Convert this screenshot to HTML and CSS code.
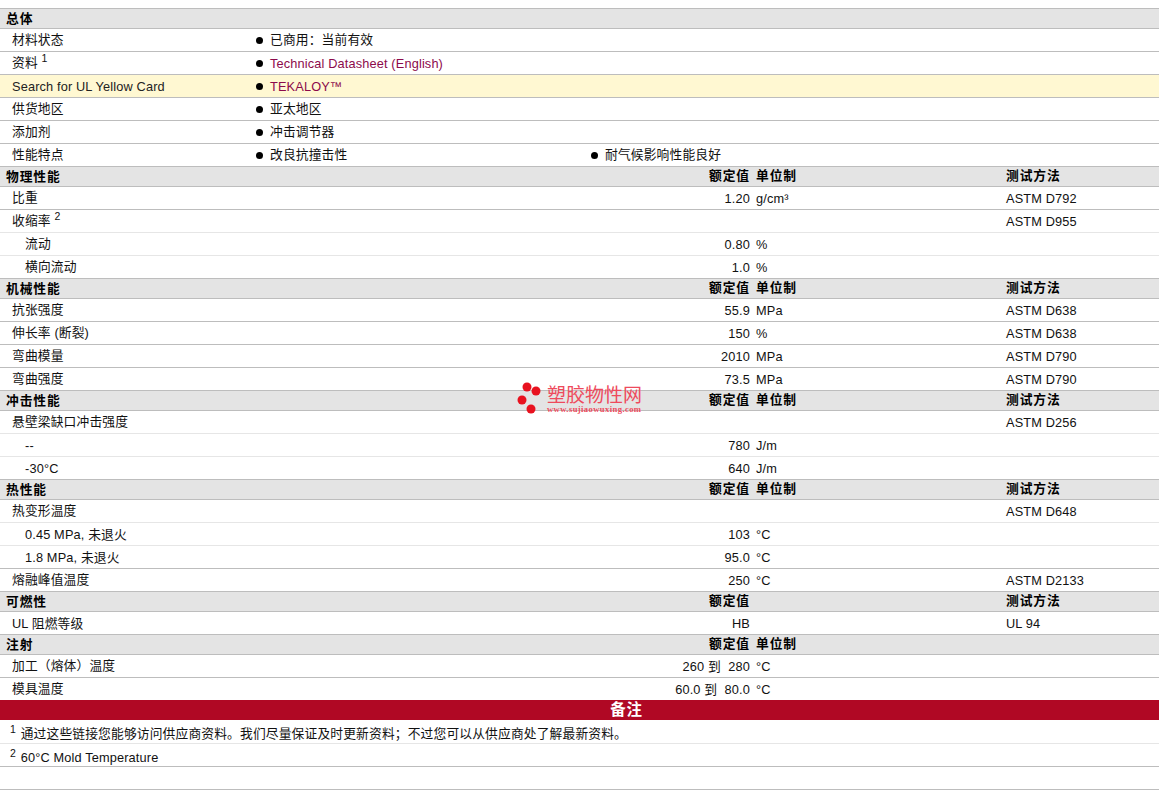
FILE: index.html
```html
<!DOCTYPE html>
<html lang="zh">
<head>
<meta charset="utf-8">
<title>TEKALOY</title>
<link rel="stylesheet" href="styles.css">
</head>
<body>
<div class="sheet">
  <div class="row head first"><span class="name">总体</span></div>
  <div class="row info"><span class="label">材料状态</span><span class="item">已商用：当前有效</span></div>
  <div class="row info"><span class="label">资料 <sup>1</sup></span><a class="item link latin">Technical Datasheet (English)</a></div>
  <div class="row info yellow"><a class="label latin">Search for UL Yellow Card</a><a class="item link latin">TEKALOY™</a></div>
  <div class="row info"><span class="label">供货地区</span><span class="item">亚太地区</span></div>
  <div class="row info"><span class="label">添加剂</span><span class="item">冲击调节器</span></div>
  <div class="row info"><span class="label">性能特点</span><span class="item">改良抗撞击性</span><span class="item">耐气候影响性能良好</span></div>

  <div class="row head"><span class="name">物理性能</span><span class="val">额定值</span><span class="unit">单位制</span><span class="test">测试方法</span></div>
  <div class="row data"><span class="label">比重</span><span class="val">1.20</span><span class="unit">g/cm³</span><span class="test">ASTM D792</span></div>
  <div class="row data light"><span class="label">收缩率 <sup>2</sup></span><span class="val"></span><span class="unit"></span><span class="test">ASTM D955</span></div>
  <div class="row data light"><span class="label sub">流动</span><span class="val">0.80</span><span class="unit">%</span><span class="test"></span></div>
  <div class="row data"><span class="label sub">横向流动</span><span class="val">1.0</span><span class="unit">%</span><span class="test"></span></div>

  <div class="row head"><span class="name">机械性能</span><span class="val">额定值</span><span class="unit">单位制</span><span class="test">测试方法</span></div>
  <div class="row data"><span class="label">抗张强度</span><span class="val">55.9</span><span class="unit">MPa</span><span class="test">ASTM D638</span></div>
  <div class="row data"><span class="label">伸长率 (断裂)</span><span class="val">150</span><span class="unit">%</span><span class="test">ASTM D638</span></div>
  <div class="row data"><span class="label">弯曲模量</span><span class="val">2010</span><span class="unit">MPa</span><span class="test">ASTM D790</span></div>
  <div class="row data"><span class="label">弯曲强度</span><span class="val">73.5</span><span class="unit">MPa</span><span class="test">ASTM D790</span></div>

  <div class="row head"><span class="name">冲击性能</span><span class="val">额定值</span><span class="unit">单位制</span><span class="test">测试方法</span></div>
  <div class="row data light"><span class="label">悬壁梁缺口冲击强度</span><span class="val"></span><span class="unit"></span><span class="test">ASTM D256</span></div>
  <div class="row data light"><span class="label sub latin">--</span><span class="val">780</span><span class="unit">J/m</span><span class="test"></span></div>
  <div class="row data"><span class="label sub latin">-30°C</span><span class="val">640</span><span class="unit">J/m</span><span class="test"></span></div>

  <div class="row head"><span class="name">热性能</span><span class="val">额定值</span><span class="unit">单位制</span><span class="test">测试方法</span></div>
  <div class="row data light"><span class="label">热变形温度</span><span class="val"></span><span class="unit"></span><span class="test">ASTM D648</span></div>
  <div class="row data light"><span class="label sub latin">0.45 MPa, 未退火</span><span class="val">103</span><span class="unit">°C</span><span class="test"></span></div>
  <div class="row data"><span class="label sub latin">1.8 MPa, 未退火</span><span class="val">95.0</span><span class="unit">°C</span><span class="test"></span></div>
  <div class="row data"><span class="label">熔融峰值温度</span><span class="val">250</span><span class="unit">°C</span><span class="test">ASTM D2133</span></div>

  <div class="row head"><span class="name">可燃性</span><span class="val">额定值</span><span class="unit"></span><span class="test">测试方法</span></div>
  <div class="row data"><span class="label latin">UL 阻燃等级</span><span class="val">HB</span><span class="unit"></span><span class="test">UL 94</span></div>

  <div class="row head"><span class="name">注射</span><span class="val">额定值</span><span class="unit">单位制</span><span class="test"></span></div>
  <div class="row data"><span class="label">加工（熔体）温度</span><span class="val">260 到&nbsp; 280</span><span class="unit">°C</span><span class="test"></span></div>
  <div class="row data last"><span class="label">模具温度</span><span class="val">60.0 到&nbsp; 80.0</span><span class="unit">°C</span><span class="test"></span></div>

  <div class="notes-title">备注</div>
  <div class="note note-first"><sup>1</sup> 通过这些链接您能够访问供应商资料。我们尽量保证及时更新资料；不过您可以从供应商处了解最新资料。</div>
  <div class="note"><sup>2</sup> 60°C Mold Temperature</div>
  <div class="note"></div>
</div>

<div class="mark">
  <svg class="mark-dots" width="26" height="34" viewBox="0 0 26 34" aria-hidden="true">
    <circle cx="10" cy="6" r="4.5"/>
    <circle cx="19" cy="10" r="4.5"/>
    <circle cx="5" cy="19" r="4.5"/>
    <circle cx="14" cy="28" r="4.5"/>
  </svg>
  <div class="mark-text">
    <div class="mark-cn">塑胶物性网</div>
    <div class="mark-url">www.sujiaowuxing.com</div>
  </div>
</div>
</body>
</html>
```

FILE: styles.css
```css
* { box-sizing: border-box; }

html, body {
  margin: 0;
  background: #fff;
}

body {
  padding-top: 8px;
  height: 797px;
  overflow: hidden;
  position: relative;
  font-family: "Liberation Sans", "Noto Sans CJK SC", sans-serif;
  font-size: 12.75px;
  letter-spacing: 0.15px;
  color: #111;
}

.sheet { display: flex; flex-direction: column; }

.row {
  display: grid;
  grid-template-rows: minmax(0, 1fr);
  align-items: center;
  height: 23px;
  padding-left: 6px;
  border-bottom: 1px solid #bdbdbd;
  line-height: 22px;
  white-space: nowrap;
}

.info { grid-template-columns: 249px 335px 1fr; }
.data, .head { grid-template-columns: 744px 256px 1fr; }
.light { border-bottom-color: #e6e6e6; }
.last { height: 22px; border-bottom: 0; }
.yellow { background: #fff8d2; }

.head {
  height: 20px;
  line-height: 19px;
  background: #e4e4e4;
  font-weight: 700;
  color: #000;
  letter-spacing: 0.9px;
}
.head.first { height: 21px; border-top: 1px solid #bdbdbd; }

/* the name and value share one track; the value sits at the right of it */
.name, .label { grid-column: 1; grid-row: 1; }
.label { padding-left: 6px; }
.label.sub { padding-left: 19px; }
.val { grid-column: 1; grid-row: 1; text-align: right; }
.unit { padding-left: 6px; }

/* Latin text in the reference sits a pixel lower than CJK text */
.data .val, .data .unit, .data .test, .latin { padding-top: 2px; }
.head .val, .head .unit, .head .test { padding-bottom: 2px; }

.item {
  display: flex;
  align-items: center;
  padding-left: 15px;
  position: relative;
}
.item::before {
  content: "";
  position: absolute;
  left: 1px;
  top: 50%;
  width: 7px;
  height: 7px;
  margin-top: -3px;
  border-radius: 50%;
  background: #000;
}

.link { color: #8c0a4b; }
a.label { color: #222; }

sup {
  font-size: 10.5px;
  line-height: 0;
  vertical-align: 5px;
}
.note sup { margin-right: 1px; }

.notes-title {
  height: 20px;
  line-height: 19px;
  background: #b00824;
  color: #fff;
  font-size: 15.5px;
  font-weight: 700;
  letter-spacing: 0.8px;
  text-align: center;
  padding-left: 94px;
}

.note {
  height: 23px;
  line-height: 27px;
  padding-left: 10px;
  border-bottom: 1px solid #bdbdbd;
  white-space: nowrap;
}
.note-first {
  height: 24px;
  border-bottom-color: #e6e6e6;
}

.mark {
  position: absolute;
  left: 517px;
  top: 381px;
  display: flex;
  gap: 4px;
  pointer-events: none;
}
.mark-dots { fill: #e8121f; flex: none; }
.mark-text { padding-top: 5px; }
.mark-cn {
  font-size: 19px;
  line-height: 19px;
  letter-spacing: 0;
  color: #ee4a5c;
}
.mark-url {
  font-family: "Liberation Serif", serif;
  font-size: 8.6px;
  line-height: 9px;
  font-weight: 700;
  letter-spacing: 0.4px;
  color: #ee4a5c;
}
```
